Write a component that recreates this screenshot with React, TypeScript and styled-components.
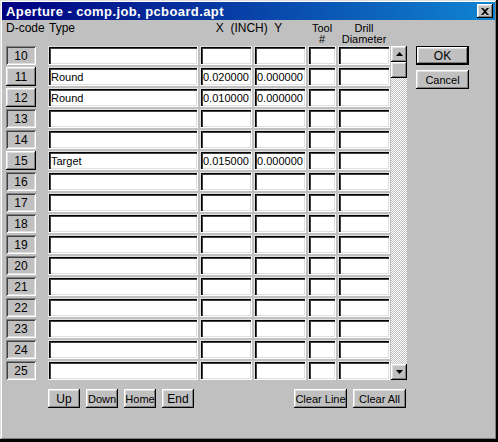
import styled, { createGlobalStyle } from "styled-components";

const GlobalStyle = createGlobalStyle`
  html, body {
    margin: 0;
    padding: 0;
    background: #000;
  }
  body {
    font-family: "Liberation Sans", Arial, sans-serif;
    font-size: 11px;
  }
`;

interface ApertureRow {
  code: number;
  type?: string;
  x?: string;
  y?: string;
}

const rows: ApertureRow[] = [
  { code: 10 },
  { code: 11, type: "Round", x: "0.020000", y: "0.000000" },
  { code: 12, type: "Round", x: "0.010000", y: "0.000000" },
  { code: 13 },
  { code: 14 },
  { code: 15, type: "Target", x: "0.015000", y: "0.000000" },
  { code: 16 },
  { code: 17 },
  { code: 18 },
  { code: 19 },
  { code: 20 },
  { code: 21 },
  { code: 22 },
  { code: 23 },
  { code: 24 },
  { code: 25 },
];

// d-code column is 40 wide: a 30px button plus the gap to the type field
const columns = "40px 150px 52px 52px 28px 52px";

const raised = `
  box-shadow: inset -1px -1px #000, inset 1px 1px #fff, inset -2px -2px #808080, inset 2px 2px #dfdfdf;
`;

const Window = styled.div`
  box-sizing: border-box;
  width: 497px;
  height: 440px;
  background: #c0c0c0;
  box-shadow: inset -1px -1px #000, inset 1px 1px #dfdfdf, inset -2px -2px #808080, inset 2px 2px #fff;
  padding: 2px;
  display: flex;
  flex-direction: column;
  color: #000;
`;

const TitleBar = styled.div`
  height: 18px;
  background: linear-gradient(90deg, #000080, #1084d0);
  display: flex;
  align-items: center;
  justify-content: space-between;
  padding: 0 2px 0 4px;
`;

const Title = styled.span`
  color: #fff;
  font-weight: bold;
  font-size: 13px;
  letter-spacing: 0.4px;
`;

const CloseButton = styled.button`
  width: 16px;
  height: 14px;
  padding: 0;
  border: none;
  background: #c0c0c0;
  display: flex;
  align-items: center;
  justify-content: center;
  ${raised}
`;

const Body = styled.div`
  display: flex;
  gap: 9px;
  padding: 0 0 0 4px;
`;

const TablePane = styled.div`
  display: flex;
  flex-direction: column;
`;

const Header = styled.div`
  display: grid;
  grid-template-columns: ${columns};
  column-gap: 2px;
  height: 26px;
  padding-top: 3px;
  box-sizing: border-box;
  line-height: 11px;
`;

const HeadLabel = styled.div<{ $align?: string; $span?: number; $indent?: number; $size?: number }>`
  text-align: ${({ $align }) => $align ?? "center"};
  grid-column: span ${({ $span }) => $span ?? 1};
  padding-left: ${({ $indent }) => $indent ?? 0}px;
  font-size: ${({ $size }) => $size ?? 11}px;
  white-space: pre;
`;

const GridArea = styled.div`
  display: flex;
  gap: 1px;
`;

const Rows = styled.div`
  display: flex;
  flex-direction: column;
  gap: 2px;
`;

const Row = styled.div`
  display: grid;
  grid-template-columns: ${columns};
  column-gap: 2px;
  height: 19px;
`;

const CodeButton = styled.button<{ $used: boolean }>`
  box-sizing: border-box;
  width: 30px;
  height: 19px;
  padding: 0;
  border: none;
  background: #c0c0c0;
  font: inherit;
  font-size: 12px;
  color: #000;
  box-shadow: ${({ $used }) =>
    $used
      ? "inset -1px -1px #000, inset 1px 1px #fff, inset -2px -2px #808080, inset 2px 2px #dfdfdf"
      : "inset 1px 1px #808080, inset -1px -1px #fff, inset 2px 2px #404040, inset -2px -2px #dfdfdf"};
`;

const Field = styled.div`
  box-sizing: border-box;
  height: 19px;
  background: #fff;
  box-shadow: inset 1px 1px #000, inset 2px 2px #404040, inset -1px -1px #dfdfdf;
  border: 1px solid;
  border-color: #dfdfdf #fff #fff #dfdfdf;
  padding: 2px 0 0 2px;
  font-size: 11px;
  line-height: 14px;
  white-space: nowrap;
  overflow: hidden;
`;

const Scrollbar = styled.div`
  width: 16px;
  height: 334px;
  display: flex;
  flex-direction: column;
  background: repeating-conic-gradient(#fff 0 25%, #c0c0c0 0 50%) 0 0 / 2px 2px;
`;

const ScrollButton = styled.div`
  width: 16px;
  height: 16px;
  flex: none;
  background: #c0c0c0;
  display: flex;
  align-items: center;
  justify-content: center;
  ${raised}
`;

const Track = styled.div`
  flex: 1;
`;

const ButtonBar = styled.div`
  display: flex;
  justify-content: space-between;
  margin-top: 9px;
  padding: 0 1px 0 42px;
`;

const ButtonGroup = styled.div<{ $gap: number }>`
  display: flex;
  gap: ${({ $gap }) => $gap}px;
`;

const PushButton = styled.button<{ $width: number; $default?: boolean; $size?: number }>`
  box-sizing: border-box;
  width: ${({ $width }) => $width}px;
  height: 19px;
  padding: 0;
  border: ${({ $default }) => ($default ? "1px solid #000" : "none")};
  background: #c0c0c0;
  font: inherit;
  font-size: ${({ $size }) => $size ?? 11}px;
  color: #000;
  white-space: nowrap;
  ${raised}
`;

const SidePane = styled.div`
  display: flex;
  flex-direction: column;
  gap: 5px;
  padding-top: 26px;
`;

const Arrow = ({ up }: { up?: boolean }) => (
  <svg width="7" height="4" viewBox="0 0 7 4">
    <path d={up ? "M3.5 0 L7 4 L0 4 Z" : "M0 0 L7 0 L3.5 4 Z"} fill="#000" />
  </svg>
);

const App = () => {
  return (
    <>
      <GlobalStyle />
      <Window>
        <TitleBar>
          <Title>Aperture - comp.job, pcboard.apt</Title>
          <CloseButton aria-label="Close">
            <svg width="8" height="7" viewBox="0 0 8 7">
              <path d="M0 0 L2 0 L4 2 L6 0 L8 0 L5 3.5 L8 7 L6 7 L4 5 L2 7 L0 7 L3 3.5 Z" fill="#000" />
            </svg>
          </CloseButton>
        </TitleBar>
        <Body>
          <TablePane>
            <Header>
              <HeadLabel $align="left" $size={12}>D-code</HeadLabel>
              <HeadLabel $align="left" $indent={1} $size={12}>Type</HeadLabel>
              <HeadLabel $span={2} $size={12} style={{ paddingRight: 8 }}>{"X  (INCH)  Y"}</HeadLabel>
              <HeadLabel>{"Tool\n#"}</HeadLabel>
              <HeadLabel>{"Drill\nDiameter"}</HeadLabel>
            </Header>
            <GridArea>
              <Rows>
                {rows.map((r) => (
                  <Row key={r.code}>
                    <CodeButton $used={!!r.type}>{r.code}</CodeButton>
                    <Field>{r.type}</Field>
                    <Field>{r.x}</Field>
                    <Field>{r.y}</Field>
                    <Field />
                    <Field />
                  </Row>
                ))}
              </Rows>
              <Scrollbar>
                <ScrollButton>
                  <Arrow up />
                </ScrollButton>
                <ScrollButton />
                <Track />
                <ScrollButton>
                  <Arrow />
                </ScrollButton>
              </Scrollbar>
            </GridArea>
            <ButtonBar>
              <ButtonGroup $gap={6}>
                <PushButton $width={32} $size={12}>Up</PushButton>
                <PushButton $width={32}>Down</PushButton>
                <PushButton $width={32}>Home</PushButton>
                <PushButton $width={32} $size={12}>End</PushButton>
              </ButtonGroup>
              <ButtonGroup $gap={6}>
                <PushButton $width={53}>Clear Line</PushButton>
                <PushButton $width={53}>Clear All</PushButton>
              </ButtonGroup>
            </ButtonBar>
          </TablePane>
          <SidePane>
            <PushButton $width={53} $default $size={12}>
              OK
            </PushButton>
            <PushButton $width={53}>Cancel</PushButton>
          </SidePane>
        </Body>
      </Window>
    </>
  );
};

export default App;
